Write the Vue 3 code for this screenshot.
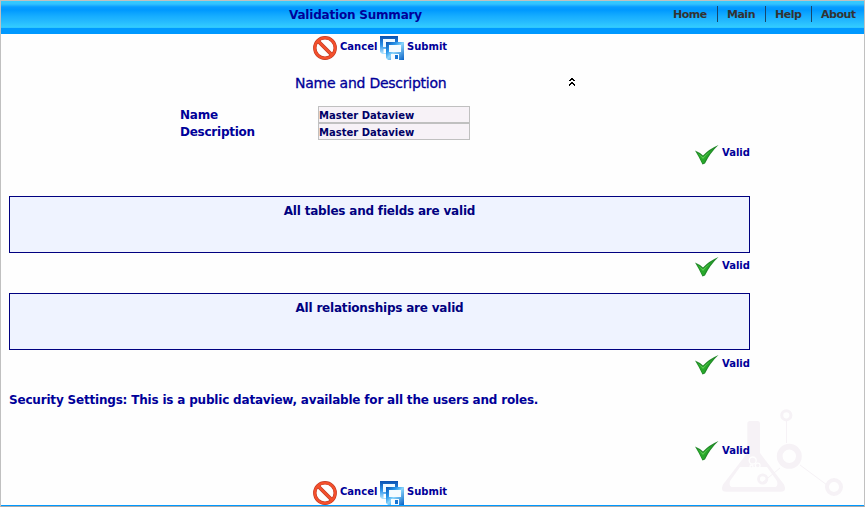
<script setup>
const menu = ['Home', 'Main', 'Help', 'About']
const panels = [
  { text: 'All tables and fields are valid', kind: 'tables' },
  { text: 'All relationships are valid', kind: 'relations' }
]
</script>

<template>
  <div class="page">
    <svg class="watermark" viewBox="0 0 125 92" width="125" height="92">
      <g fill="none" stroke="#f6f2f6">
        <path d="M66.500 12V34M60 59L43 73M80 56L107 76" stroke-width="1" />
        <circle cx="66.300" cy="6.300" r="4.600" stroke-width="3" />
        <circle cx="69.300" cy="47.300" r="9.600" stroke-width="5.800" />
        <circle cx="114" cy="78" r="7" stroke-width="4" />
      </g>
      <path fill="#f6f2f6" fill-rule="evenodd" d="M30 12H37.500Q40 12 40 15V44L64 75.500Q67 82.700 61 82.700H6Q0 82.700 3 75.500L27.300 44V15Q27.300 12 30 12ZM20 58L10 72Q8.500 78 13 78H54Q58.500 78 57 72L47 58Z" />
      <g stroke="#fefefe" stroke-width="1.300" fill="#f6f2f6">
        <circle cx="32.700" cy="51.500" r="3.500" />
        <circle cx="37.700" cy="56.500" r="2.400" />
        <circle cx="31.500" cy="57.500" r="1.500" />
      </g>
      <circle cx="42.700" cy="70" r="4.200" fill="none" stroke="#f6f2f6" stroke-width="2.800" />
    </svg>

    <header class="bar">
      <h1>Validation Summary</h1>
      <nav><a v-for="m in menu" :key="m" :class="m.toLowerCase()">{{ m }}</a></nav>
    </header>

    <main>
      <template v-for="place in ['top', 'bottom']" :key="place">
        <div class="tools" :class="place">
          <svg class="cancel-icon" width="24" height="24" viewBox="0 0 24 24">
            <circle cx="12" cy="12" r="10.200" fill="none" stroke="#c03a24" stroke-width="3.400" />
            <path d="M5 5L19 19" stroke="#c03a24" stroke-width="3.800" />
            <circle cx="12" cy="12" r="10.200" fill="none" stroke="#f4502c" stroke-width="2.200" />
            <path d="M5 5L19 19" stroke="#f4502c" stroke-width="2.400" />
          </svg>
          <span class="small cancel">Cancel</span>
          <svg class="save-icon" width="24" height="24" viewBox="0 0 24 24">
            <defs>
              <linearGradient :id="'back' + place" x1="0" y1="0" x2="0" y2="1">
                <stop offset="0" stop-color="#0a50b0" />
                <stop offset=".5" stop-color="#2a90e8" />
                <stop offset="1" stop-color="#b8e8ff" />
              </linearGradient>
              <linearGradient :id="'disk' + place" x1="0" y1="0" x2="1" y2="1">
                <stop offset="0" stop-color="#0a50b0" />
                <stop offset=".3" stop-color="#2795e9" />
                <stop offset=".5" stop-color="#8bd5fb" />
                <stop offset="1" stop-color="#0860c4" />
              </linearGradient>
            </defs>
            <path d="M0 0h18v18H2l-2-2z" :fill="`url(#back${place})`" />
            <path d="M3 3h12v8H3z" fill="#eef9ff" />
            <path d="M3.500 13H7v4H3.500z" fill="#fff" />
            <path d="M6 6h18v18H8l-2-2z" :fill="`url(#disk${place})`" />
            <path d="M9 9h12v7H9z" fill="#f6fcff" />
            <path d="M11 18h8v6h-8z" fill="#f6fcff" />
            <path d="M15 19h3v4h-3z" fill="#1674d2" />
          </svg>
          <span class="small submit">Submit</span>
        </div>

        <template v-if="place === 'top'">
          <section class="details">
            <div class="heading">
              <h2>Name and Description</h2>
              <svg width="6" height="8" viewBox="0 0 6 8" shape-rendering="crispEdges" class="collapse">
                <path d="M2 0h2v1h1v1h1v1H4V2H2v1H0V2h1V1h1zM2 4h2v1h1v1h1v2H5V7H4V6H2V7H1v1H0V6h1V5h1z" />
              </svg>
            </div>
            <div class="field"><label class="name">Name</label><span class="value"><b>Master Dataview</b></span></div>
            <div class="field"><label class="desc">Description</label><span class="value"><b>Master Dataview</b></span></div>
          </section>
          <div class="status s0">
            <svg width="24" height="20" viewBox="0 0 24 20"><path d="M0 5.500Q4 7 8 10.500Q14 4 23.500 0Q15 8 10 18.500L7.500 19.500Q4 12 0 5.500Z" fill="#23882a" /><path d="M2 7.500L8 12Q13 6.500 19 3.500Q12.500 10 9 18L7.800 18.500Z" fill="#27a82a" /><path d="M3 8.200L8 12.300Q11 9 15 6.500Q11 10 8 14Z" fill="#5ccb52" /></svg>
            <span class="small valid">Valid</span>
          </div>
          <template v-for="(p, i) in panels" :key="p.text">
            <div class="panel"><span :class="p.kind">{{ p.text }}</span></div>
            <div class="status" :class="'s' + (i + 1)">
              <svg width="24" height="20" viewBox="0 0 24 20"><path d="M0 5.500Q4 7 8 10.500Q14 4 23.500 0Q15 8 10 18.500L7.500 19.500Q4 12 0 5.500Z" fill="#23882a" /><path d="M2 7.500L8 12Q13 6.500 19 3.500Q12.500 10 9 18L7.800 18.500Z" fill="#27a82a" /><path d="M3 8.200L8 12.300Q11 9 15 6.500Q11 10 8 14Z" fill="#5ccb52" /></svg>
              <span class="small valid">Valid</span>
            </div>
          </template>
          <p class="security">Security Settings: This is a public dataview, available for all the users and roles.</p>
          <div class="status s3">
            <svg width="24" height="20" viewBox="0 0 24 20"><path d="M0 5.500Q4 7 8 10.500Q14 4 23.500 0Q15 8 10 18.500L7.500 19.500Q4 12 0 5.500Z" fill="#23882a" /><path d="M2 7.500L8 12Q13 6.500 19 3.500Q12.500 10 9 18L7.800 18.500Z" fill="#27a82a" /><path d="M3 8.200L8 12.300Q11 9 15 6.500Q11 10 8 14Z" fill="#5ccb52" /></svg>
            <span class="small valid">Valid</span>
          </div>
        </template>
      </template>
    </main>
  </div>
</template>

<style>
body { background: #fefefe; overflow: hidden; }
</style>

<style scoped>
* { box-sizing: border-box; }
.page { position: relative; height: 507px; border: 1px solid #c0c0c0; border-bottom-color: #aaa; background: #fefefe; color: #000099; font: bold 12px/16px "DejaVu Sans", sans-serif; white-space: nowrap; overflow: hidden; }
.page::after { content: ""; position: absolute; left: 0; right: 0; bottom: 0; height: 1px; background: #0099ff; }
h1, h2, p { margin: 0; }
svg { display: block; flex: none; }
.watermark { position: absolute; left: 719px; top: 408px; }
main { position: relative; }
.bar { height: 33px; display: flex; justify-content: space-between; border-bottom: 6px solid #0099ff; background: linear-gradient(#33ccff 0, #33c2ff 3px, #099cff 6px, #0099ff 9px, #16adff 15px, #24b9ff 20px, #33ccff 26px, #2abfff 27px); }
h1 { font-size: 12px; line-height: 16px; margin: 6px 0 0 288px; letter-spacing: -.2px; }
nav { display: flex; margin: 5px 0 0; height: 16px; font-size: 11px; color: #333; letter-spacing: -.5px; }
nav a { line-height: 17px; border-left: 1px solid #17466b; padding-left: 9px; }
nav a:first-child { border: 0; padding: 0; }
.home { width: 44px; }
.main { width: 48px; }
.help { width: 46px; }
.about { width: 53px; }
.tools { display: flex; height: 26px; padding: 2px 0 0 312px; }
.small { font-size: 10px; line-height: 14px; }
.tools .small { margin-top: 4px; }
.cancel { width: 40px; margin-left: 3px; }
.submit { margin-left: 3px; }
.heading { display: flex; padding: 13px 0 0 294px; height: 46px; }
h2 { font-weight: normal; font-size: 14px; line-height: 20px; width: 274px; letter-spacing: -.24px; -webkit-text-stroke: .3px #000099; }
.collapse { margin-top: 5px; }
.field { display: flex; height: 17px; padding-left: 179px; }
label { width: 138px; line-height: 18px; letter-spacing: -.25px; }
.value { width: 152px; height: 17px; border: 1px solid #c0c0c0; background: #f7f2f7; padding-left: 0; font-size: 10px; line-height: 17px; color: #000066; }
.status { display: flex; padding-left: 694px; }
.status .small { margin: 1px 0 0 3px; }
.s0 { height: 56px; padding-top: 5px; }
.s1 { height: 40px; padding-top: 5px; }
.s1 svg, .s2 svg { margin-top: -1px; }
.s2 { height: 41px; padding-top: 6px; }
.s3 { height: 38px; padding-top: 0; }
.s3 .small { margin-top: 3px; }
.panel { height: 57px; margin: 0 0 0 8px; width: 741px; border: 1px solid #000080; background: #eff3ff; padding-top: 6px; text-align: center; color: #000080; letter-spacing: -.2px; }
.security { height: 50px; padding: 1px 0 0 8px; letter-spacing: -.19px; }
</style>
